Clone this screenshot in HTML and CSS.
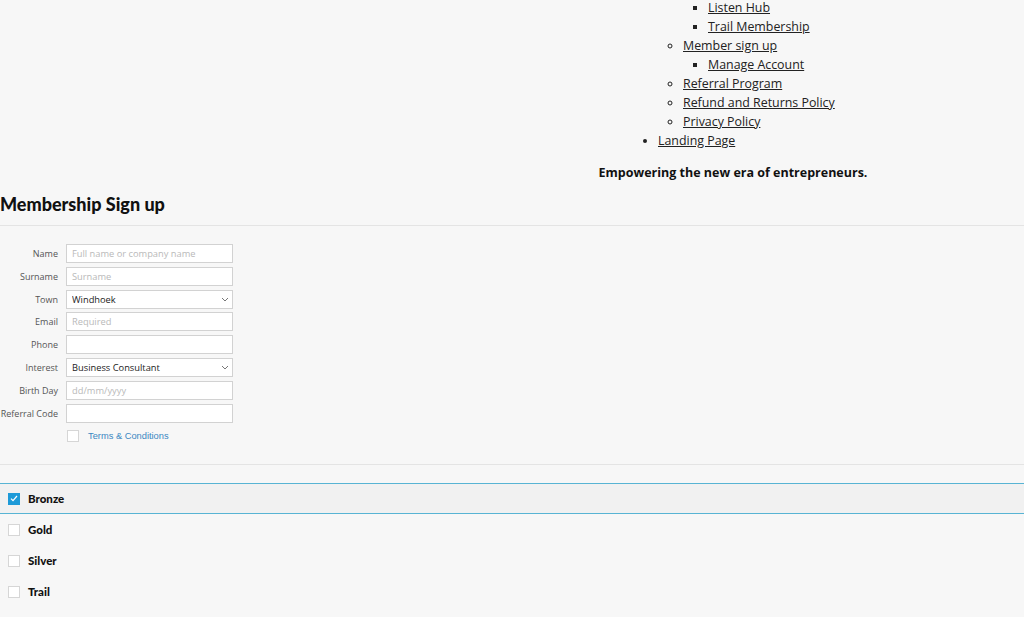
FILE: index.html
```html
<!DOCTYPE html>
<html lang="en">
  <head>
    <meta charset="UTF-8" />
    <meta name="viewport" content="width=device-width, initial-scale=1.0" />
    <title>Membership Sign up</title>
    <link rel="stylesheet" href="styles.css">
  </head>

  <body>
    <header class="site-header">
      <div class="header-right">
        <ul class="menu">
          <li class="no-mark">
            <ul>
              <li class="no-mark">
                <ul>
                  <li><a href="#">Listen Hub</a></li>
                  <li><a href="#">Trail Membership</a></li>
                </ul>
              </li>
              <li>
                <a href="#">Member sign up</a>
                <ul>
                  <li><a href="#">Manage Account</a></li>
                </ul>
              </li>
              <li><a href="#">Referral Program</a></li>
              <li><a href="#">Refund and Returns Policy</a></li>
              <li><a href="#">Privacy Policy</a></li>
            </ul>
          </li>
          <li><a href="#">Landing Page</a></li>
        </ul>
        <p class="tagline">Empowering the new era of entrepreneurs.</p>
      </div>
    </header>

    <main>
      <h1 class="page-title">Membership Sign up</h1>
      <div class="line"></div>

      <form class="signup">
        <label for="name">Name</label>
        <input type="text" id="name" placeholder="Full name or company name" />

        <label for="surname">Surname</label>
        <input type="text" id="surname" placeholder="Surname" />

        <label for="town">Town</label>
        <div class="select-wrap">
          <select id="town">
            <option>Windhoek</option>
          </select>
          <svg class="chevron" width="8" height="5" viewBox="0 0 8 5"><path d="M1 1l3 3 3-3" fill="none" stroke="#777" stroke-width="1"/></svg>
        </div>

        <label for="email">Email</label>
        <input type="text" id="email" placeholder="Required" />

        <label for="phone">Phone</label>
        <input type="text" id="phone" />

        <label for="interest">Interest</label>
        <div class="select-wrap">
          <select id="interest">
            <option>Business Consultant</option>
          </select>
          <svg class="chevron" width="8" height="5" viewBox="0 0 8 5"><path d="M1 1l3 3 3-3" fill="none" stroke="#777" stroke-width="1"/></svg>
        </div>

        <label for="birth">Birth Day</label>
        <input type="text" id="birth" placeholder="dd/mm/yyyy" />

        <label for="ref">Referral Code</label>
        <input type="text" id="ref" />

        <span></span>
        <div class="terms">
          <span class="box"></span>
          <a href="#">Terms &amp; Conditions</a>
        </div>
      </form>

      <div class="line"></div>

      <div class="plans">
        <div class="plan selected">
          <span class="box checked">
            <svg width="8" height="7" viewBox="0 0 8 7"><path d="M1 3.6l2 2L7 1" fill="none" stroke="#fff" stroke-width="1.2"/></svg>
          </span>
          Bronze
        </div>
        <div class="plan"><span class="box"></span>Gold</div>
        <div class="plan"><span class="box"></span>Silver</div>
        <div class="plan"><span class="box"></span>Trail</div>
      </div>
    </main>
  </body>
</html>
```

FILE: styles.css
```css
* {
  margin: 0;
  padding: 0;
  box-sizing: border-box;
}

body {
  background-color: #f7f7f7;
  font-family: "Open Sans", sans-serif;
  color: #222222;
}

.site-header {
  display: flex;
  justify-content: flex-end;
}

.header-right {
  width: 582px;
}

.menu {
  margin-top: -2px;
  margin-left: 191px;
  font-size: 12.4px;
  line-height: 19px;
}

.menu ul {
  padding-left: 25px;
}

.menu > li {
  list-style: disc;
  margin-left: 25px;
}

.menu > li > ul > li {
  list-style: circle;
}

.menu > li > ul > li > ul > li {
  list-style: square;
}

.menu li.no-mark {
  list-style: none;
}

.menu a {
  color: #222222;
  text-decoration: underline;
}

.tagline {
  margin-top: 13px;
  text-align: center;
  font-weight: 700;
  font-size: 12.5px;
  line-height: 19px;
  color: #111111;
}

.page-title {
  margin-top: 12px;
  font-family: "Lato", sans-serif;
  font-weight: 900;
  font-size: 18px;
  line-height: 20px;
  color: #111111;
  padding-bottom: 11px;
}

.line {
  height: 1px;
  background-color: #e4e4e4;
}

.signup {
  display: grid;
  grid-template-columns: 58px 167px;
  grid-auto-rows: 19px;
  column-gap: 8px;
  row-gap: 3.8px;
  padding-top: 18px;
  padding-bottom: 19px;
  align-items: center;
}

.signup label {
  text-align: right;
  font-size: 9px;
  color: #555555;
  white-space: nowrap;
}

.signup input,
.signup select {
  display: block;
  width: 100%;
  height: 19px;
  border: 1px solid #d2d2d2;
  background-color: #ffffff;
  font-family: "Open Sans", sans-serif;
  font-size: 9.3px;
  padding: 0 5px;
  color: #222222;
  outline: none;
  border-radius: 0;
}

.signup input::placeholder {
  color: #b9b9b9;
}

.select-wrap {
  position: relative;
  height: 19px;
}

.signup select {
  appearance: none;
  -webkit-appearance: none;
}

.chevron {
  position: absolute;
  right: 4px;
  top: 7px;
}

.terms {
  display: flex;
  align-items: center;
  gap: 9px;
  padding-left: 1px;
}

.terms a {
  font-family: "Liberation Sans", Arial, sans-serif;
  font-size: 9.3px;
  color: #3b87c2;
  text-decoration: none;
}

.box {
  display: inline-flex;
  align-items: center;
  justify-content: center;
  width: 12px;
  height: 12px;
  border: 1px solid #d6d6d6;
  background-color: #ffffff;
}

.box.checked {
  background-color: #1d9ad8;
  border-color: #1d9ad8;
}

.plans {
  margin-top: 18px;
}

.plan {
  display: flex;
  align-items: center;
  gap: 8px;
  height: 31px;
  padding-left: 8px;
  font-family: "Lato", sans-serif;
  font-weight: 900;
  font-size: 11.5px;
  color: #111111;
}

.plan.selected {
  background-color: #f1f1f1;
  border-top: 1px solid #58b4d4;
  border-bottom: 1px solid #58b4d4;
}

.plan.selected + .plan {
  margin-top: 0;
}
```
